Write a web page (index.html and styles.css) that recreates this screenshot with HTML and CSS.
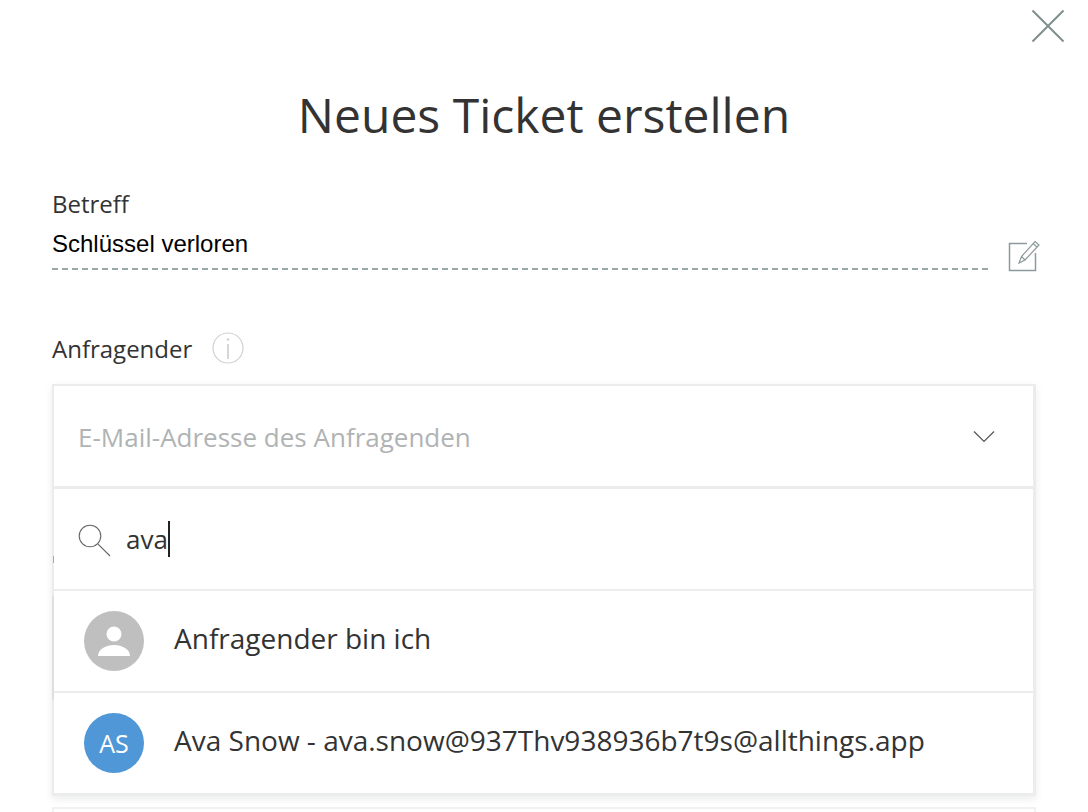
FILE: index.html
```html
<!DOCTYPE html>
<html lang="de">
<head>
<meta charset="utf-8">
<title>Neues Ticket erstellen</title>
<link rel="stylesheet" href="styles.css">
</head>
<body>
<main class="modal">
  <button class="close" aria-label="Schließen">
    <svg width="34" height="34" viewBox="0 0 34 34"><path d="M1.5 1.5 32.5 32.5M32.5 1.5 1.5 32.5" fill="none" stroke="#7f8f8f" stroke-width="2"/></svg>
  </button>
  <h1 class="title">Neues Ticket erstellen</h1>
  <section class="subject">
    <div class="subject-field">
      <div class="label">Betreff</div>
      <div class="subject-value">Schlüssel verloren</div>
    </div>
    <svg class="edit" width="32" height="34" viewBox="0 0 32 34"><path d="M19 4.5H1.5V31.5H27.5V14" fill="none" stroke="#8b9a9a" stroke-width="1.5"/><path d="M27 2.5 31 6 17 21 11 24 13.5 17.5ZM13.5 17.5 17 21M25 4.5 29 8" fill="none" stroke="#8b9a9a" stroke-width="1.2"/></svg>
  </section>
  <div class="requester-label">
    <span class="label">Anfragender</span>
    <svg width="32" height="32" viewBox="0 0 32 32"><circle cx="16" cy="16" r="15" fill="none" stroke="#cfd3d3" stroke-width="1.2"/><path d="M16 12V27" stroke="#cfd3d3" stroke-width="1.8"/><circle cx="16" cy="7.5" r="1.3" fill="#cfd3d3"/></svg>
  </div>
  <div class="dropdown">
    <div class="select">
      <span class="placeholder">E-Mail-Adresse des Anfragenden</span>
      <svg width="22" height="13" viewBox="0 0 22 13"><path d="M1 1.5 11 11.5 21 1.5" fill="none" stroke="#555" stroke-width="1.2"/></svg>
    </div>
    <div class="search">
      <svg width="34" height="34" viewBox="0 0 34 34"><circle cx="13" cy="13" r="10.8" fill="none" stroke="#666" stroke-width="1.1"/><path d="M20.8 20.8 33 33" stroke="#666" stroke-width="1.1"/></svg>
      <span class="search-text">ava</span><span class="caret"></span>
    </div>
    <div class="option">
      <span class="avatar avatar-me">
        <svg width="32" height="32" viewBox="0 0 32 32"><circle cx="16" cy="9" r="7.5" fill="#fff"/><path d="M0 31C0 24 8 20 16 20S32 24 32 31Z" fill="#fff"/></svg>
      </span>
      <span class="option-text">Anfragender bin ich</span>
    </div>
    <div class="option">
      <span class="avatar avatar-user">AS</span>
      <span class="option-text">Ava Snow - ava.snow@937Thv938936b7t9s@allthings.app</span>
    </div>
  </div>
  <div class="next-box"></div>
</main>
</body>
</html>
```
FILE: styles.css
```css
html, body {
  margin: 0;
  padding: 0;
  background: #fff;
  height: 100%;
  overflow: hidden;
}
.modal {
  position: relative;
  height: 812px;
  padding: 0 52px;
  box-sizing: border-box;
  font-family: "Open Sans", sans-serif;
  color: #333;
}
.close {
  position: absolute;
  top: 9px;
  right: 23px;
  width: 34px;
  height: 34px;
  padding: 0;
  border: 0;
  background: none;
}
.close svg, .edit, .requester-label svg, .select svg, .search svg, .avatar svg {
  display: block;
}
.title {
  margin: 0;
  padding-top: 82px;
  height: 65px;
  line-height: 65px;
  font-size: 48px;
  font-weight: 400;
  text-align: center;
  color: #333;
}
.subject {
  display: flex;
  align-items: flex-end;
  justify-content: space-between;
  margin-top: 41px;
  width: 988px;
}
.subject-field {
  width: 936px;
  height: 82px;
  background: repeating-linear-gradient(90deg, #9aa8a8 0 6px, transparent 6px 10px) left 80px / 100% 2px no-repeat;
}
.label {
  display: block;
  font-size: 24px;
  line-height: 30px;
  padding-top: 1px;
  color: #333;
}
.subject-value {
  font-family: "Liberation Sans", sans-serif;
  font-size: 24px;
  line-height: 26px;
  margin-top: 12px;
  color: #000;
}
.edit {
  margin-bottom: -3px;
  margin-left: -1px;
}
.requester-label {
  display: flex;
  align-items: center;
  gap: 20px;
  margin-top: 62px;
  height: 32px;
}
.dropdown {
  position: relative;
  margin-top: 20px;
  width: 984px;
  box-sizing: border-box;
  border: 2px solid #ebeded;
  border-right-width: 3px;
  border-bottom-width: 3px;
  box-shadow: 0 3px 8px rgba(0, 0, 0, .08);
  background: #fff;
}
.dropdown::before {
  content: "";
  position: absolute;
  left: -2px;
  top: 210px;
  width: 2px;
  height: 104px;
  background: #dedfdf;
}
.dropdown::after {
  content: "";
  position: absolute;
  left: -1px;
  top: 170px;
  width: 1px;
  height: 7px;
  background: #a9abab;
}
.select {
  display: flex;
  align-items: center;
  justify-content: space-between;
  height: 100px;
  padding: 0 38px 0 24px;
  border-bottom: 3px solid #ebeded;
}
.placeholder {
  font-size: 26px;
  padding-top: 2px;
  color: #b0b3b3;
}
.search {
  display: flex;
  align-items: center;
  height: 100px;
  padding-left: 23px;
  border-bottom: 2px solid #ebeded;
}
.search svg {
  margin-top: 2px;
}
.search-text {
  font-size: 26px;
  margin-left: 15px;
  color: #333;
}
.caret {
  width: 2px;
  height: 36px;
  background: #222;
}
.option {
  display: flex;
  align-items: center;
  height: 100px;
  padding-left: 30px;
  gap: 30px;
  font-size: 28px;
}
.option-text {
  padding-bottom: 7px;
}
.option + .option {
  border-top: 2px solid #ebeded;
}
.avatar {
  display: flex;
  align-items: center;
  justify-content: center;
  width: 60px;
  height: 60px;
  border-radius: 50%;
  color: #fff;
  font-size: 25px;
}
.avatar-me {
  background: #bfbfbf;
}
.avatar-user {
  background: #4f97d7;
}
.next-box {
  margin-top: 11px;
  width: 984px;
  height: 20px;
  box-sizing: border-box;
  border: 2px solid #f0f1f1;
}
```
